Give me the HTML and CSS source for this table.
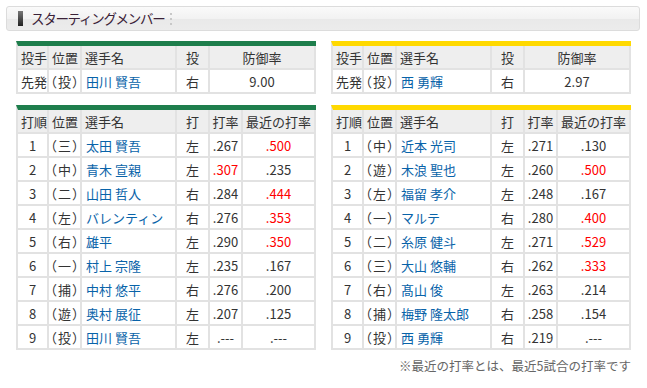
FILE: index.html
```html
<!DOCTYPE html>
<html lang="ja">
<head>
<meta charset="utf-8">
<link rel="stylesheet" href="styles.css">
</head>
<body>
<div class="page">
  <div class="title-box">
    <span class="title-bar"></span>
    <h2 class="title">スターティングメンバー</h2>
    <span class="title-dots"><i></i><i></i><i></i></span>
  </div>

  <div class="cols">
    <div class="col">
      <table class="tbl green">
        <colgroup><col class="c1"><col class="c2"><col class="c3"><col class="c4"><col class="c5w"></colgroup>
        <tr class="hd"><th>投手</th><th>位置</th><th>選手名</th><th class="ct">投</th><th class="ct">防御率</th></tr>
        <tr><td>先発</td><td class="pos">（投）</td><td class="nm">田川 賢吾</td><td class="ct">右</td><td class="ct">9.00</td></tr>
      </table>
      <table class="tbl green bat">
        <colgroup><col class="c1"><col class="c2"><col class="c3"><col class="c4"><col class="c5"><col class="c6"></colgroup>
        <tr class="hd"><th>打順</th><th>位置</th><th>選手名</th><th class="ct">打</th><th class="ct">打率</th><th class="ct">最近の打率</th></tr>
        <tr><td class="ct">1</td><td class="pos">（三）</td><td class="nm">太田 賢吾</td><td class="ct">左</td><td class="ct">.267</td><td class="ct red">.500</td></tr>
        <tr><td class="ct">2</td><td class="pos">（中）</td><td class="nm">青木 宣親</td><td class="ct">左</td><td class="ct red">.307</td><td class="ct">.235</td></tr>
        <tr><td class="ct">3</td><td class="pos">（二）</td><td class="nm">山田 哲人</td><td class="ct">右</td><td class="ct">.284</td><td class="ct red">.444</td></tr>
        <tr><td class="ct">4</td><td class="pos">（左）</td><td class="nm">バレンティン</td><td class="ct">右</td><td class="ct">.276</td><td class="ct red">.353</td></tr>
        <tr><td class="ct">5</td><td class="pos">（右）</td><td class="nm">雄平</td><td class="ct">左</td><td class="ct">.290</td><td class="ct red">.350</td></tr>
        <tr><td class="ct">6</td><td class="pos">（一）</td><td class="nm">村上 宗隆</td><td class="ct">左</td><td class="ct">.235</td><td class="ct">.167</td></tr>
        <tr><td class="ct">7</td><td class="pos">（捕）</td><td class="nm">中村 悠平</td><td class="ct">右</td><td class="ct">.276</td><td class="ct">.200</td></tr>
        <tr><td class="ct">8</td><td class="pos">（遊）</td><td class="nm">奥村 展征</td><td class="ct">左</td><td class="ct">.207</td><td class="ct">.125</td></tr>
        <tr><td class="ct">9</td><td class="pos">（投）</td><td class="nm">田川 賢吾</td><td class="ct">左</td><td class="ct">.---</td><td class="ct">.---</td></tr>
      </table>
    </div>

    <div class="col">
      <table class="tbl yellow">
        <colgroup><col class="c1"><col class="c2"><col class="c3"><col class="c4"><col class="c5w"></colgroup>
        <tr class="hd"><th>投手</th><th>位置</th><th>選手名</th><th class="ct">投</th><th class="ct">防御率</th></tr>
        <tr><td>先発</td><td class="pos">（投）</td><td class="nm">西 勇輝</td><td class="ct">右</td><td class="ct">2.97</td></tr>
      </table>
      <table class="tbl yellow bat">
        <colgroup><col class="c1"><col class="c2"><col class="c3"><col class="c4"><col class="c5"><col class="c6"></colgroup>
        <tr class="hd"><th>打順</th><th>位置</th><th>選手名</th><th class="ct">打</th><th class="ct">打率</th><th class="ct">最近の打率</th></tr>
        <tr><td class="ct">1</td><td class="pos">（中）</td><td class="nm">近本 光司</td><td class="ct">左</td><td class="ct">.271</td><td class="ct">.130</td></tr>
        <tr><td class="ct">2</td><td class="pos">（遊）</td><td class="nm">木浪 聖也</td><td class="ct">左</td><td class="ct">.260</td><td class="ct red">.500</td></tr>
        <tr><td class="ct">3</td><td class="pos">（左）</td><td class="nm">福留 孝介</td><td class="ct">左</td><td class="ct">.248</td><td class="ct">.167</td></tr>
        <tr><td class="ct">4</td><td class="pos">（一）</td><td class="nm">マルテ</td><td class="ct">右</td><td class="ct">.280</td><td class="ct red">.400</td></tr>
        <tr><td class="ct">5</td><td class="pos">（二）</td><td class="nm">糸原 健斗</td><td class="ct">左</td><td class="ct">.271</td><td class="ct red">.529</td></tr>
        <tr><td class="ct">6</td><td class="pos">（三）</td><td class="nm">大山 悠輔</td><td class="ct">右</td><td class="ct">.262</td><td class="ct red">.333</td></tr>
        <tr><td class="ct">7</td><td class="pos">（右）</td><td class="nm">髙山 俊</td><td class="ct">左</td><td class="ct">.263</td><td class="ct">.214</td></tr>
        <tr><td class="ct">8</td><td class="pos">（捕）</td><td class="nm">梅野 隆太郎</td><td class="ct">右</td><td class="ct">.258</td><td class="ct">.154</td></tr>
        <tr><td class="ct">9</td><td class="pos">（投）</td><td class="nm">西 勇輝</td><td class="ct">右</td><td class="ct">.219</td><td class="ct">.---</td></tr>
      </table>
      <p class="note">※最近の打率とは、最近5試合の打率です</p>
    </div>
  </div>
</div>
</body>
</html>
```

FILE: styles.css
```css
* { box-sizing: border-box; }
html, body { margin: 0; padding: 0; background: #fff; }
body {
  font-family: "Noto Sans CJK JP", "Noto Sans", sans-serif;
  color: #333;
}
.page { padding: 6px 7px 0 6px; }

.title-box {
  display: flex;
  align-items: center;
  height: 25px;
  border: 1px solid #dcdcdc;
  border-radius: 3px;
  background: linear-gradient(to bottom, #fafafa 0%, #f2f2f2 50%, #e9e9e9 51%, #ececec 100%);
  padding-left: 11px;
}
.title-bar {
  width: 5px;
  height: 15px;
  background: linear-gradient(to bottom, #777, #222);
  margin-right: 8px;
}
.title {
  margin: 0;
  font-size: 13.5px;
  font-weight: normal;
  color: #3a2238;
  line-height: 1;
  letter-spacing: -1.3px;
}
.title-dots {
  display: flex;
  flex-direction: column;
  gap: 3px;
  margin-left: 6px;
}
.title-dots i {
  display: block;
  width: 2px;
  height: 2px;
  background: #c8c8c8;
}

.cols {
  display: flex;
  gap: 15px;
  padding: 10px 0 0 10px;
}
.col { width: 300px; }

.tbl {
  width: 300px;
  border-collapse: separate;
  border-spacing: 0;
  table-layout: fixed;
  font-size: 13px;
  margin-bottom: 11px;
  border-left: 2px solid #e2e2e2;
}
.tbl.green { border-top: 5px solid #1e7e4c; }
.tbl.yellow { border-top: 5px solid #ffd900; }
.tbl th, .tbl td {
  height: 24px;
  border-right: 2px solid #e2e2e2;
  border-bottom: 2px solid #e2e2e2;
  padding: 0 0 0 3px;
  font-weight: normal;
  text-align: left;
  white-space: nowrap;
  line-height: 1;
}
.tbl .hd th { background: #eeeeee; height: 24px; }
.tbl .pos { padding-left: 1px; font-feature-settings: "palt"; letter-spacing: 1.5px; }
.tbl .ct { text-align: center; padding: 0; }
.tbl .nm { color: #0863a9; padding-left: 4px; }
.tbl .red { color: #f00; }

col.c1 { width: 31px; }
col.c2 { width: 33px; }
col.c3 { width: 95px; }
col.c4 { width: 33px; }
col.c5 { width: 33px; }
col.c5w { width: 106px; }
col.c6 { width: 73px; }

.note {
  margin: -5px 0 0;
  text-align: right;
  font-size: 12.5px;
  color: #666;
}
```
